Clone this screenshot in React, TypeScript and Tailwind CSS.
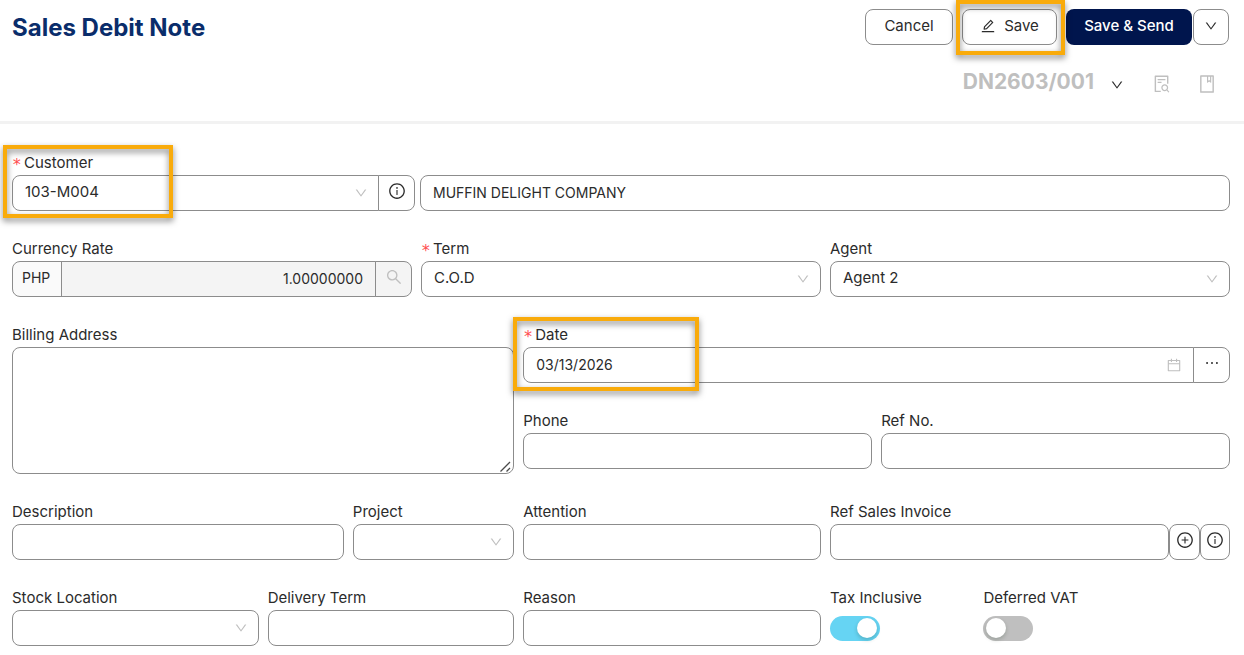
import { useId, type ReactNode } from 'react';
import {
  AiOutlineBook,
  AiOutlineCalendar,
  AiOutlineDown,
  AiOutlineEdit,
  AiOutlineEllipsis,
  AiOutlineFileSearch,
  AiOutlineInfoCircle,
  AiOutlinePlusCircle,
  AiOutlineSearch,
} from 'react-icons/ai';

const CONTROL = 'h-9 w-full min-w-0 border border-[#8c8c8c] bg-white px-3 pb-0.5 outline-none';
const BOX = `${CONTROL} text-sm`;
const ICON_BUTTON = 'flex h-9 shrink-0 items-center justify-center border border-[#8c8c8c] bg-white pb-1';

function Field({
  id,
  label,
  required,
  className = '',
  children,
}: {
  id: string;
  label: string;
  required?: boolean;
  className?: string;
  children: ReactNode;
}) {
  return (
    <div className={`relative flex min-w-0 flex-col ${className}`}>
      <label htmlFor={id} className="flex h-6 items-center whitespace-nowrap text-[15px] leading-6">
        {required && (
          <span className="w-3 pt-1 font-['DejaVu_Sans_Mono'] text-base leading-4 text-[#ff4d4f]">*</span>
        )}
        {label}
      </label>
      {children}
    </div>
  );
}

function TextField({ label, className }: { label: string; className?: string }) {
  const id = useId();
  return (
    <Field id={id} label={label} className={className}>
      <input id={id} type="text" className={`${BOX} rounded-lg`} />
    </Field>
  );
}

function Select({ id, value, className = 'rounded-lg' }: { id: string; value?: string; className?: string }) {
  return (
    <div className="relative min-w-0 flex-1">
      <select id={id} className={`${CONTROL} appearance-none text-[15px] ${className}`}>
        <option>{value ?? ''}</option>
      </select>
      <AiOutlineDown className="pointer-events-none absolute top-[11px] right-[11px] size-[14px] text-[#bfbfbf]" />
    </div>
  );
}

function SelectField({
  label,
  value,
  required,
  className,
}: {
  label: string;
  value?: string;
  required?: boolean;
  className?: string;
}) {
  const id = useId();
  return (
    <Field id={id} label={label} required={required} className={className}>
      <Select id={id} value={value} />
    </Field>
  );
}

function SwitchField({ label, on, className }: { label: string; on?: boolean; className?: string }) {
  const id = useId();
  return (
    <Field id={id} label={label} className={className}>
      <div className="flex h-9 items-center">
        <input
          id={id}
          type="checkbox"
          role="switch"
          defaultChecked={on}
          className="flex h-[25px] w-[50px] appearance-none items-center rounded-full bg-[#bfbfbf] px-[3px] before:size-5 before:rounded-full before:bg-white before:shadow-[0_2px_4px_rgba(0,35,11,0.2)] checked:justify-end checked:bg-[#66d4f3]"
        />
      </div>
    </Field>
  );
}

function Highlight({ className }: { className: string }) {
  return (
    <span
      aria-hidden="true"
      className={`pointer-events-none absolute z-10 border-[4px] border-[#f9ab0b] drop-shadow-[0_3px_3px_rgba(0,0,0,0.5)] ${className}`}
    />
  );
}

function Header() {
  const button = 'flex h-9 items-center justify-center rounded-lg border border-[#8c8c8c] bg-white pb-0.5';
  return (
    <header className="border-b-[3px] border-[#f2f2f2] pt-[9px] pr-[15px] pb-[23px] pl-3">
      <div className="flex items-center justify-between">
        <h1 className="pt-0.5 text-2xl font-bold text-[#0a2d6b]">Sales Debit Note</h1>
        <div className="flex items-center text-[15px]">
          <button type="button" className={`${button} w-[88px]`}>Cancel</button>
          <div className="relative mx-[9px]">
            <button type="button" className={`${button} w-[95px] gap-2`}>
              <AiOutlineEdit className="size-4" />
              Save
            </button>
            <Highlight className="-top-[9px] -right-2 -bottom-[10px] -left-[6px]" />
          </div>
          <button
            type="button"
            className="flex h-9 w-[126px] items-center justify-center rounded-lg bg-[#00154d] pb-0.5 font-medium text-white"
          >
            Save &amp; Send
          </button>
          <button type="button" aria-label="More save options" className={`${button} ml-px w-9`}>
            <AiOutlineDown className="size-[14px]" />
          </button>
        </div>
      </div>
      <div className="mt-5 flex h-[33px] items-center justify-end pr-3">
        <span className="text-[21px] font-bold text-[#bfbfbf]">DN2603/001</span>
        <button type="button" aria-label="Choose number format" className="mt-1.5 ml-4">
          <AiOutlineDown className="size-[14px]" />
        </button>
        <button type="button" aria-label="Preview" className="mt-1 ml-7 text-[#bfbfbf]">
          <AiOutlineFileSearch className="size-5" />
        </button>
        <button type="button" aria-label="Bookmark" className="mt-1 ml-[25px] text-[#bfbfbf]">
          <AiOutlineBook className="size-5" />
        </button>
      </div>
    </header>
  );
}

export default function App() {
  return (
    <div className="min-h-screen bg-white font-[Inter,'Liberation_Sans',sans-serif] text-[#2b2b2b]">
      <Header />
      <form className="flex flex-col gap-[26px] pt-[27px] pr-[14px] pb-2 pl-3">
        <div className="grid grid-cols-[403fr_810fr] items-end gap-[5px]">
          <Field id="customer" label="Customer" required>
            <div className="flex">
              <Select id="customer" value="103-M004" className="rounded-l-lg" />
              <button type="button" aria-label="Customer details" className={`${ICON_BUTTON} -ml-px w-[37px] rounded-r-lg`}>
                <AiOutlineInfoCircle className="size-[18px]" />
              </button>
            </div>
            <Highlight className="-top-[6px] -left-[9px] h-[73px] w-[170px]" />
          </Field>
          <input
            type="text"
            aria-label="Customer name"
            defaultValue="MUFFIN DELIGHT COMPANY"
            className={`${BOX} rounded-lg`}
          />
        </div>

        <div className="grid grid-cols-3 gap-x-[9px]">
          <Field id="rate" label="Currency Rate">
            <div className="flex">
              <span className="flex h-9 w-[50px] shrink-0 items-center rounded-l-lg border border-[#8c8c8c] bg-[#fafafa] pb-0.5 pl-[9px] text-sm">
                PHP
              </span>
              <input
                id="rate"
                type="text"
                readOnly
                defaultValue="1.00000000"
                className="-ml-px h-9 w-full min-w-0 flex-1 border border-[#8c8c8c] bg-[#f4f4f4] px-3 pb-0.5 text-right text-sm outline-none"
              />
              <button
                type="button"
                disabled
                aria-label="Look up rate"
                className="-ml-px flex h-9 w-[37px] shrink-0 items-center justify-center rounded-r-lg border border-[#8c8c8c] bg-[#f4f4f4] pb-1 text-[#bfbfbf]"
              >
                <AiOutlineSearch className="size-[18px]" />
              </button>
            </div>
          </Field>
          <SelectField label="Term" value="C.O.D" required />
          <SelectField label="Agent" value="Agent 2" />
        </div>

        <div className="grid grid-cols-24 gap-x-[9px]">
          <Field id="billing" label="Billing Address" className="col-span-10">
            <div className="relative flex">
              <textarea
                id="billing"
                className="h-[127px] w-full resize-none rounded-lg border border-[#8c8c8c] bg-white p-3 text-sm outline-none"
              />
              <svg
                viewBox="0 0 12 12"
                className="pointer-events-none absolute right-[2px] bottom-[1px] size-3 text-[#4a4a4a]"
                fill="none"
                stroke="currentColor"
                strokeWidth="1.3"
              >
                <path d="M0.5 10.5 10 1M6.5 10.5 10 7" />
              </svg>
            </div>
          </Field>
          <div className="col-span-14 flex flex-col gap-[26px]">
            <Field id="date" label="Date" required>
              <div className="flex">
                <div className="relative min-w-0 flex-1">
                  <input id="date" type="text" defaultValue="03/13/2026" className={`${BOX} rounded-l-lg`} />
                  <AiOutlineCalendar className="pointer-events-none absolute top-[10px] right-3 size-4 text-[#bfbfbf]" />
                </div>
                <button type="button" aria-label="More dates" className={`${ICON_BUTTON} -ml-px w-[37px] rounded-r-lg`}>
                  <AiOutlineEllipsis className="size-[18px]" />
                </button>
              </div>
              <Highlight className="-top-[6px] -left-[10px] h-[74px] w-[186px]" />
            </Field>
            <div className="grid grid-cols-2 gap-x-[9px]">
              <TextField label="Phone" />
              <TextField label="Ref No." />
            </div>
          </div>
        </div>

        <div className="grid grid-cols-24 gap-x-[9px]">
          <div className="col-span-10 grid grid-cols-3 gap-x-[9px]">
            <TextField label="Description" className="col-span-2" />
            <SelectField label="Project" />
          </div>
          <TextField label="Attention" className="col-span-6" />
          <Field id="invoice" label="Ref Sales Invoice" className="col-span-8">
            <div className="flex">
              <input id="invoice" type="text" className={`${BOX} flex-1 rounded-lg`} />
              <button type="button" aria-label="Add invoice" className={`${ICON_BUTTON} w-[31px] rounded-lg`}>
                <AiOutlinePlusCircle className="size-[18px]" />
              </button>
              <button type="button" aria-label="Invoice details" className={`${ICON_BUTTON} w-[30px] rounded-lg`}>
                <AiOutlineInfoCircle className="size-[18px]" />
              </button>
            </div>
          </Field>
        </div>

        <div className="grid grid-cols-24 gap-x-[9px]">
          <SelectField label="Stock Location" className="col-span-5" />
          <TextField label="Delivery Term" className="col-span-5" />
          <TextField label="Reason" className="col-span-6" />
          <SwitchField label="Tax Inclusive" on className="col-span-3" />
          <SwitchField label="Deferred VAT" className="col-span-3" />
        </div>
      </form>
    </div>
  );
}
